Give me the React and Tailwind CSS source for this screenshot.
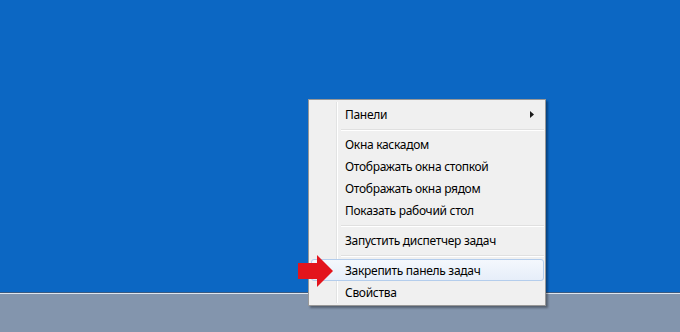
import React from 'react';

const groups = [
  [{ label: 'Панели', sub: true }],
  [
    { label: 'Окна каскадом' },
    { label: 'Отображать окна стопкой' },
    { label: 'Отображать окна рядом' },
    { label: 'Показать рабочий стол' },
  ],
  [{ label: 'Запустить диспетчер задач' }],
  [{ label: 'Закрепить панель задач', active: true }, { label: 'Свойства' }],
];

function MenuItem({ label, sub, active }) {
  return (
    <div
      className={
        'relative flex h-[22px] items-center pl-[33px] pr-[9px] mr-[1px] border ' +
        (active
          ? 'rounded-[3px] border-[#b4cdec] bg-gradient-to-b from-[#f4f8fd] to-[#e6eef9]'
          : 'border-transparent')
      }
    >
      <span className="flex-1 pt-[1px] text-[12px] tracking-[-0.3px] text-black">{label}</span>
      {sub && (
        <svg width="4" height="7" viewBox="0 0 4 7">
          <path d="M0 0 L4 3.5 L0 7 Z" fill="#1a1a1a" />
        </svg>
      )}
    </div>
  );
}

function Separator() {
  return (
    <div className="h-[8px] pl-[30px] pr-[1px] pt-[4px]">
      <div className="h-px bg-[#e0e0e0]" />
      <div className="h-px bg-white" />
    </div>
  );
}

export default function App() {
  return (
    <div
      className="relative flex h-[332px] w-[680px] flex-col overflow-hidden"
      style={{ fontFamily: '"Noto Sans", "Open Sans", sans-serif' }}
    >
      {/* desktop */}
      <div className="h-[292px] bg-[#0c67c3]" />

      {/* taskbar */}
      <div className="flex-1 border-t border-[#3a5a80] bg-[#8395ad]">
        <div className="h-px bg-[#dfe5ed]" />
      </div>

      {/* context menu */}
      <div className="absolute left-[308px] top-[99px] w-[238px] border border-[#979797] bg-[#f0f0f0] pt-[3px] pb-[2px] pl-[2px] shadow-[2px_2px_2px_rgba(0,0,0,0.35)]">
        <div className="absolute bottom-[2px] left-[27px] top-[2px] flex">
          <div className="w-px bg-[#e2e3e3]" />
          <div className="w-px bg-white" />
        </div>
        <div className="relative">
          {groups.map((items, gi) => (
            <React.Fragment key={gi}>
              {gi > 0 && <Separator />}
              {items.map((it) => (
                <MenuItem key={it.label} {...it} />
              ))}
            </React.Fragment>
          ))}
        </div>
      </div>

      {/* red pointer arrow */}
      <svg
        className="absolute left-[298px] top-[255px]"
        width="36"
        height="33"
        viewBox="0 0 36 33"
      >
        <path d="M0 8 L19 8 L19 0 L35 16 L19 32 L19 24 L0 24 Z" fill="#e3141c" />
      </svg>
    </div>
  );
}
